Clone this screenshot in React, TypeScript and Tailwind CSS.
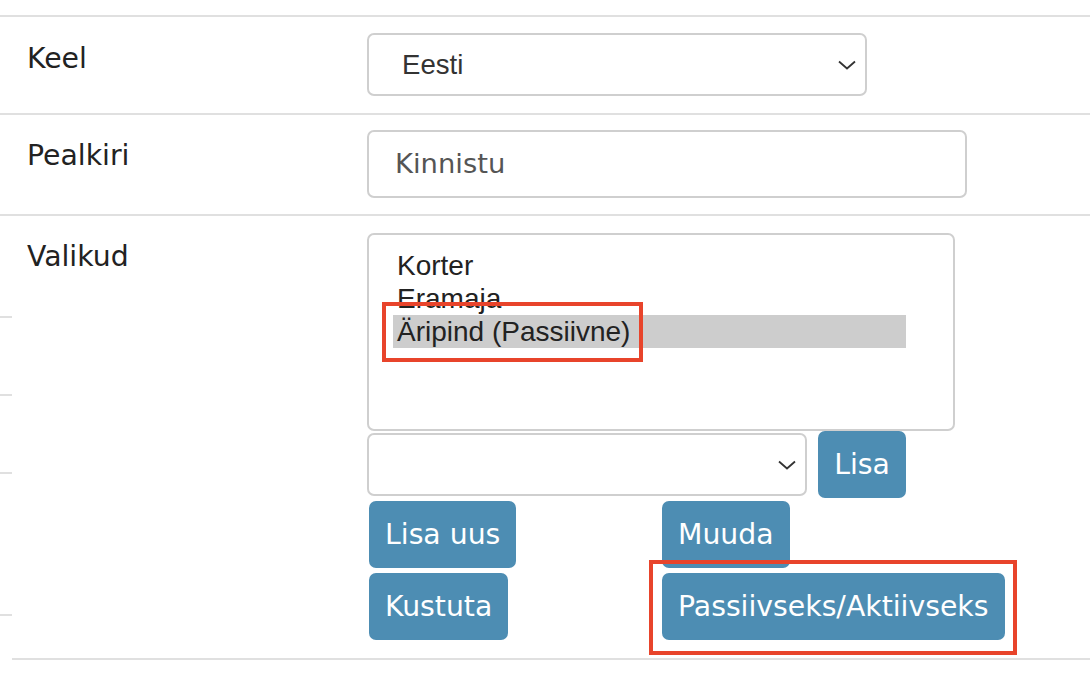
import React from "react";

const label = "font-['DejaVu_Sans',Verdana,sans-serif] text-[28.3px] leading-[40px] text-[#222]";
const btn =
  "rounded-[7px] bg-[#4d8db3] text-white font-['DejaVu_Sans',Verdana,sans-serif] text-[28.3px] leading-[67px] h-[67px] px-[16px]";

function Chevron() {
  return (
    <svg width="18" height="10" viewBox="0 0 18 10" fill="none" className="shrink-0">
      <path d="M1 1.5 L9 8.5 L17 1.5" stroke="#333" strokeWidth="1.8" />
    </svg>
  );
}

function Select({ value, className }: { value?: string; className: string }) {
  return (
    <div
      className={`flex items-center justify-between rounded-[7px] border-2 border-[#cfcfcf] bg-white pl-[33px] pr-[9px] font-['Liberation_Sans',Arial,sans-serif] text-[27.6px] text-[#333] ${className}`}
    >
      <span>{value}</span>
      <Chevron />
    </div>
  );
}

export default function App() {
  const options = [
    { name: "Korter", selected: false },
    { name: "Eramaja", selected: false },
    { name: "Äripind (Passiivne)", selected: true },
  ];

  return (
    <div className="min-h-[676px] bg-white pt-[15px]">
      {/* Keel */}
      <div className="flex border-t-2 border-[#e0e0e0] pt-[16px] pb-[17px]">
        <div className={`w-[367px] pl-[27px] pt-[6px] ${label}`}>Keel</div>
        <Select value="Eesti" className="w-[500px] h-[63px]" />
      </div>

      {/* Pealkiri */}
      <div className="flex border-t-2 border-[#e0e0e0] pt-[15px] pb-[16px]">
        <div className={`w-[367px] pl-[27px] pt-[6px] ${label}`}>Pealkiri</div>
        <div className="w-[600px] h-[68px] rounded-[7px] border-2 border-[#cfcfcf] flex items-center pl-[26px] font-['DejaVu_Sans',Verdana,sans-serif] text-[27.4px] text-[#555]">
          Kinnistu
        </div>
      </div>

      {/* Valikud */}
      <div className="flex border-t-2 border-[#e0e0e0]">
        <div className="w-[12px] flex flex-col">
          <div className="h-[100px]" />
          <div className="h-[78px] border-t-2 border-[#e0e0e0]" />
          <div className="h-[78px] border-t-2 border-[#e0e0e0]" />
          <div className="h-[142px] border-t-2 border-[#e0e0e0]" />
          <div className="border-t-2 border-[#e0e0e0]" />
        </div>
        <div className="flex-1 flex border-b-2 border-[#e0e0e0] pt-[17px] pb-[18px]">
          <div className={`w-[355px] pl-[15px] pt-[4px] ${label}`}>Valikud</div>
          <div className="w-[588px] flex flex-col">
            <div className="relative h-[198px] rounded-[7px] border-2 border-[#cfcfcf] pt-[14px] pl-[24px] pr-[47px] font-['Liberation_Sans',Arial,sans-serif] text-[28px] leading-[33px] text-[#222]">
              {options.map((o) => (
                <div key={o.name} className={`h-[33px] pl-[4px] ${o.selected ? "bg-[#cdcdcd]" : ""}`}>
                  {o.name}
                </div>
              ))}
              <div className="absolute left-[13px] top-[67px] w-[261px] h-[60px] border-4 border-[#e8442b]" />
            </div>
            <div className="flex items-center gap-[11px]">
              <Select className="w-[440px] h-[63px]" />
              <button className={`${btn} w-[88px] px-0`}>Lisa</button>
            </div>
            <div className="mt-[3px] grid grid-cols-2 gap-y-[5px] pl-[2px]">
              <div>
                <button className={btn}>Lisa uus</button>
              </div>
              <div>
                <button className={btn}>Muuda</button>
              </div>
              <div>
                <button className={btn}>Kustuta</button>
              </div>
              <div className="relative">
                <button className={btn}>Passiivseks/Aktiivseks</button>
                <div className="absolute left-[-13px] top-[-13px] w-[368px] h-[95px] border-4 border-[#e8442b]" />
              </div>
            </div>
          </div>
        </div>
      </div>
    </div>
  );
}
